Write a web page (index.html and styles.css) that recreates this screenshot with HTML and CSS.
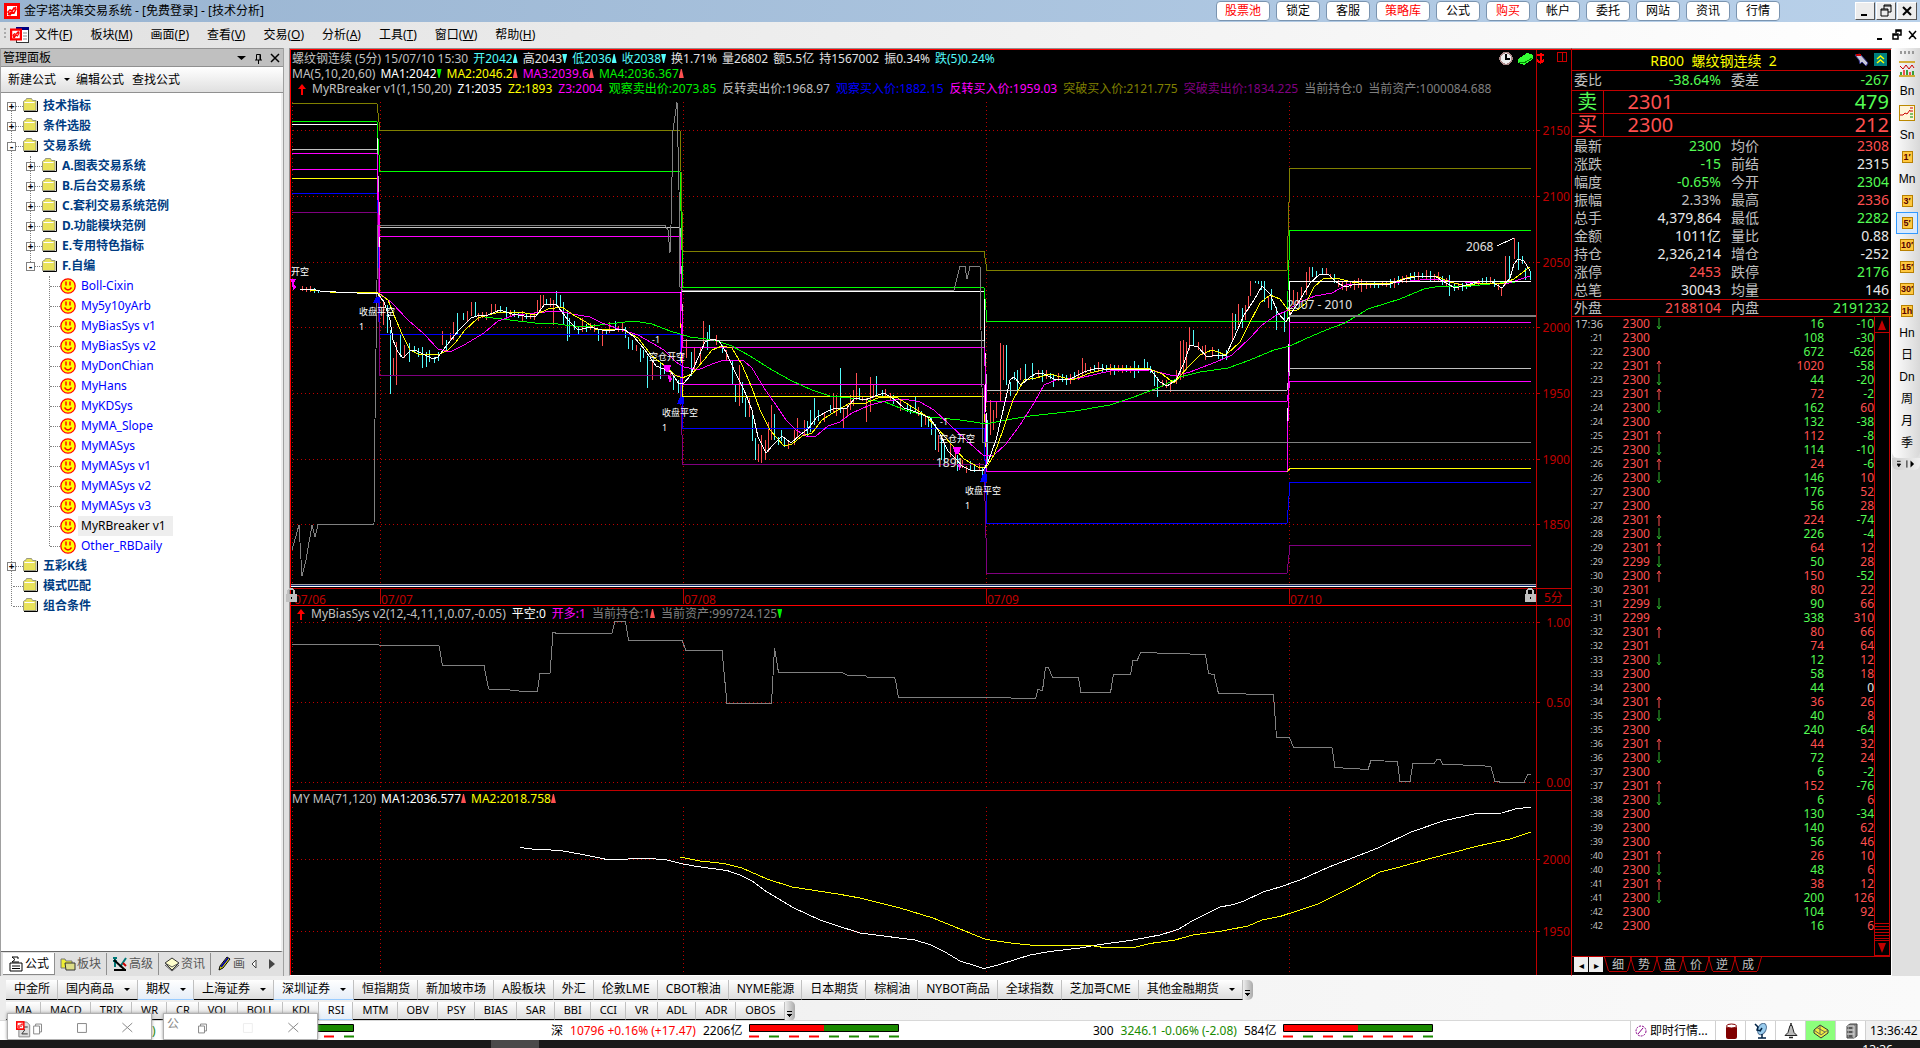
FILE: index.html
```html
<!DOCTYPE html>
<html lang="zh-CN">
<head>
<meta charset="utf-8">
<title>金字塔决策交易系统</title>
<link rel="stylesheet" href="styles.css">
</head>
<body>
<svg class="defs" aria-hidden="true">
  <symbol id="logo" viewBox="0 0 16 16"><rect width="16" height="16" fill="#f00"/><rect x="3" y="3" width="10" height="10" fill="#fff"/><path d="M4 12l3-3M9 7l3-3M4 9l2-2 2 1 2-3 2 1-2 4-2-1-2 3z" fill="none" stroke="#f00" stroke-width="1.5"/></symbol>
  <symbol id="folder" viewBox="0 0 16 14"><path d="M1.5 12.500V3.500l1-1h1l1-2h5l1 2h3.500v10z" fill="#e9e25a" stroke="#9a9a80"/><path d="M2 13.500h13.500V3" fill="none" stroke="#000"/><path d="M2.500 4.500h10" stroke="#fff"/></symbol>
  <symbol id="smile" viewBox="0 0 16 16"><circle cx="8" cy="8" r="7.200" fill="#ff0" stroke="#f00" stroke-width="1.300"/><path d="M6 3.500v4M10 3.500v4M4.500 9.500q3.500 5 7 0" fill="none" stroke="#f00" stroke-width="1.400"/></symbol>
  <symbol id="lock" viewBox="0 0 12 14"><path d="M3 7V3q0-2 3-2t3 2v4" fill="none" stroke="#c0c0c0" stroke-width="1.500"/><rect x="1" y="6" width="11" height="8" fill="#c0c0c0"/><rect x="6" y="9" width="1" height="2" fill="#000"/></symbol>
</svg>

<header class="title">
  <svg class="i16"><use href="#logo"/></svg>
  <h1>金字塔决策交易系统 - [免费登录] - [技术分析]</h1>
  <nav class="pills">
    <button class="red">股票池</button><button>锁定</button><button>客服</button><button class="red">策略库</button><button>公式</button><button class="red">购买</button><button>帐户</button><button>委托</button><button>网站</button><button>资讯</button><button>行情</button>
  </nav>
  <div class="winbtns">
    <button aria-label="最小化"><svg viewBox="0 0 16 16"><path d="M4 12h6" stroke="#000" stroke-width="2"/></svg></button>
    <button aria-label="还原"><svg viewBox="0 0 16 16"><path d="M6 6V2h7v7h-3M6 3h7M3 6h7v7H3zM3 7h7" fill="none" stroke="#000"/></svg></button>
    <button aria-label="关闭"><svg viewBox="0 0 16 16"><path d="M4 4l8 8M12 4l-8 8" stroke="#000" stroke-width="2"/></svg></button>
  </div>
</header>

<nav class="menu">
  <svg class="mdi" viewBox="0 0 26 18"><path d="M1 3h2M1 7h2M1 11h2" stroke="#aaa" stroke-width="2"/><rect x="13.500" y="1.500" width="12" height="15" fill="#fff" stroke="#333"/><rect x="13" y="1" width="13" height="3" fill="#000080"/><path d="M20 7h4M20 10h4M20 13h4" stroke="#888"/><svg x="7" y="2" width="12" height="13"><use href="#logo" width="12" height="13"/></svg></svg>
  <a href="#">文件(<u>F</u>)</a><a href="#">板块(<u>M</u>)</a><a href="#">画面(<u>P</u>)</a><a href="#">查看(<u>V</u>)</a><a href="#">交易(<u>O</u>)</a><a href="#">分析(<u>A</u>)</a><a href="#">工具(<u>T</u>)</a><a href="#">窗口(<u>W</u>)</a><a href="#">帮助(<u>H</u>)</a>
  <svg class="mdibtns" viewBox="0 0 44 14"><path d="M1 11h5" stroke="#000" stroke-width="2"/><path d="M20 5V2h5v5h-2M20 3h5M17 6h5v5h-5zM17 7h5M33 3l7 8M40 3l-7 8" fill="none" stroke="#000" stroke-width="1.500"/></svg>
</nav>

<main class="work">
  <aside class="panel">
    <div class="phead"><h2>管理面板</h2>
      <svg viewBox="0 0 46 12"><path d="M0 4h9l-4.500 4z"/><path d="M18 8h7M19.500 8V2.500h4V8M21.500 8v4M23 3v5" fill="none" stroke="#000"/><path d="M34 2l8 8M42 2l-8 8" stroke="#000" stroke-width="1.500"/></svg></div>
    <div class="ptools"><button>新建公式</button><i class="dd"></i><button>编辑公式</button><button>查找公式</button></div>
    <div class="tree">
      <ul class="l1">
        <li><button class="box">+</button><svg class="fo"><use href="#folder"/></svg>技术指标</li>
        <li><button class="box">+</button><svg class="fo"><use href="#folder"/></svg>条件选股</li>
        <li><button class="box">-</button><svg class="fo"><use href="#folder"/></svg>交易系统</li>
        <ul class="l2">
          <li><button class="box">+</button><svg class="fo"><use href="#folder"/></svg>A.图表交易系统</li>
          <li><button class="box">+</button><svg class="fo"><use href="#folder"/></svg>B.后台交易系统</li>
          <li><button class="box">+</button><svg class="fo"><use href="#folder"/></svg>C.套利交易系统范例</li>
          <li><button class="box">+</button><svg class="fo"><use href="#folder"/></svg>D.功能模块范例</li>
          <li><button class="box">+</button><svg class="fo"><use href="#folder"/></svg>E.专用特色指标</li>
          <li><button class="box">-</button><svg class="fo"><use href="#folder"/></svg>F.自编</li>
        </ul>
        <ul class="l3">
          <li><svg class="i16"><use href="#smile"/></svg><span>Boll-Cixin</span></li>
          <li><svg class="i16"><use href="#smile"/></svg><span>My5y10yArb</span></li>
          <li><svg class="i16"><use href="#smile"/></svg><span>MyBiasSys v1</span></li>
          <li><svg class="i16"><use href="#smile"/></svg><span>MyBiasSys v2</span></li>
          <li><svg class="i16"><use href="#smile"/></svg><span>MyDonChian</span></li>
          <li><svg class="i16"><use href="#smile"/></svg><span>MyHans</span></li>
          <li><svg class="i16"><use href="#smile"/></svg><span>MyKDSys</span></li>
          <li><svg class="i16"><use href="#smile"/></svg><span>MyMA_Slope</span></li>
          <li><svg class="i16"><use href="#smile"/></svg><span>MyMASys</span></li>
          <li><svg class="i16"><use href="#smile"/></svg><span>MyMASys v1</span></li>
          <li><svg class="i16"><use href="#smile"/></svg><span>MyMASys v2</span></li>
          <li><svg class="i16"><use href="#smile"/></svg><span>MyMASys v3</span></li>
          <li><svg class="i16"><use href="#smile"/></svg><span class="sel">MyRBreaker v1</span></li>
          <li><svg class="i16"><use href="#smile"/></svg><span>Other_RBDaily</span></li>
        </ul>
        <li><button class="box">+</button><svg class="fo"><use href="#folder"/></svg>五彩K线</li>
        <li><i class="stub"></i><svg class="fo"><use href="#folder"/></svg>模式匹配</li>
        <li><i class="stub"></i><svg class="fo"><use href="#folder"/></svg>组合条件</li>
      </ul>
    </div>
    <nav class="ptabs">
      <button class="on"><svg class="i16" viewBox="0 0 16 16"><path d="M2 7h12v8H2zM4 10h8M4 12.500h8M10 3V1H4l3 2.500L4 6h7" fill="none" stroke="#000"/></svg>公式</button>
      <button><svg class="i16" viewBox="0 0 16 16"><path d="M1 12V3h4l1 2h6v7z" fill="#ee3" stroke="#777"/><path d="M5 7h10v7H6z" fill="#dd8" stroke="#333"/></svg>板块</button>
      <button><svg class="i16" viewBox="0 0 16 16"><path d="M1 2h4M1 5h4M3 2v9M8 11l6-9" stroke="#077" stroke-width="2"/><path d="M2 4l11 10M2 14h12" stroke="#000" stroke-width="2"/><path d="M11 7l3 3" stroke="#c00" stroke-width="2"/></svg>高级</button>
      <button><svg class="i16" viewBox="0 0 16 16"><path d="M1 7l7-5 7 5-7 7z" fill="#ffc" stroke="#333"/><path d="M1 7l7 4 7-4M1 9l7 6 7-6" fill="none" stroke="#555"/></svg>资讯</button>
      <button><svg class="i16" viewBox="0 0 16 16"><path d="M3 14l1-4 7-9 3 2-7 9z" fill="#ee0" stroke="#000"/><path d="M5 11l7-9" stroke="#00a" stroke-width="2"/></svg>画</button>
      <svg class="parr" viewBox="0 0 26 10"><path d="M6 1v8L2 5z" fill="#fff" stroke="#444"/><path d="M19 0v10l6-5z" fill="#444"/></svg>
    </nav>
  </aside>

  <section class="charts">
    <div class="legend main">
      <p><span>螺纹钢连续 (5分) 15/07/10 15:30</span> <span class="cy">开2042</span><i class="up cy"></i><span class="lt">高2043</span><i class="dn cy"></i><span class="cy">低2036</span><i class="up cy"></i><span class="cy">收2038</span><i class="dn cy"></i><span class="lt">换1.71%</span><span class="lt">量26802</span><span class="lt">额5.5亿</span><span class="lt">持1567002</span><span class="lt">振0.34%</span><span class="cy">跌(5)0.24%</span></p>
      <p><span>MA(5,10,20,60)</span> <span class="wh">MA1:2042</span><i class="dn gn"></i><span class="ye">MA2:2046.2</span><i class="up rd"></i><span class="mg">MA3:2039.6</span><i class="up rd"></i><span class="gn">MA4:2036.367</span><i class="up rd"></i></p>
      <p class="ind"><b class="arrow"></b><span>MyRBreaker v1(1,150,20)</span><span class="wh">Z1:2035</span><span class="ye">Z2:1893</span><span class="mg">Z3:2004</span><span class="gn">观察卖出价:2073.85</span><span class="si">反转卖出价:1968.97</span><span class="bl">观察买入价:1882.15</span><span class="mg">反转买入价:1959.03</span><span class="ol">突破买入价:2121.775</span><span class="pu">突破卖出价:1834.225</span><span class="gy">当前持仓:0</span><span class="gy">当前资产:1000084.688</span></p>
    </div>
    <svg class="plot" viewBox="291 98 1280 508">
      <g class="grid">
        <path d="M293 130.500H1536M293 196.500H1536M293 262.500H1536M293 327.500H1536M293 393.500H1536M293 459.500H1536M293 524.500H1536"/>
        <path d="M292.500 102V584M380.500 102V584M683.500 102V584M986.500 102V584M1289.500 102V584"/>
      </g>
      <g id="candles"></g>
      <g id="levels"></g>
      <g id="averages"></g>
      <path d="M1289 316H1536" stroke="#808080" stroke-width="2"/>
      <path d="M1289 281.500H1531" stroke="#fff"/>
      <path d="M1497 246L1514 238" stroke="#fff"/>
      <path d="M291 584.500H1536" stroke="#a0a0a0"/><path d="M291 585.500H1536" stroke="#0a246a"/><path d="M291 586.500H1536" stroke="#fff"/>
      <g class="axis"><path d="M291 588.500H1571M380.500 588V604M683.500 588V604M986.500 588V604M1289.500 588V604"/><path d="M1536.500 50V606M1536 130.500h4M1536 196.500h4M1536 262.500h4M1536 327.500h4M1536 393.500h4M1536 459.500h4M1536 524.500h4"/><path d="M291 605.500H1571" stroke="#f00"/></g>
      <g class="ticks end"><text x="1570" y="135">2150</text><text x="1570" y="201">2100</text><text x="1570" y="267">2050</text><text x="1570" y="332">2000</text><text x="1570" y="398">1950</text><text x="1570" y="464">1900</text><text x="1570" y="529">1850</text></g>
      <g class="ticks"><text x="294" y="604">07/06</text><text x="381" y="604">07/07</text><text x="684" y="604">07/08</text><text x="987" y="604">07/09</text><text x="1290" y="604">07/10</text><text x="1544" y="602">5分</text></g>
      <g fill="#f0f"><path d="M290 279h6l-3 6zM292 284h2l2 3-3 3zM663 365h8l-2 7h-3zM668 375l4 4-3 4zM953 447h8l-2 7h-4zM958 463l3 4-2 4z"/></g>
      <g fill="#00f"><path d="M373 303l3-6h4v6zM677 404l3-7h4v7zM980 482l3-8h4v8z"/></g>
      <g class="marks"><text x="291" y="275">开空</text><text x="359" y="315">收盘平空</text><text x="359" y="330">1</text><text x="652" y="343">-1</text><text x="649" y="360">空仓开空</text><text x="662" y="416">收盘平空</text><text x="662" y="431">1</text><text x="940" y="425">-1</text><text x="939" y="442">空仓开空</text><text x="965" y="494">收盘平空</text><text x="965" y="509">1</text></g>
      <g class="notes"><text x="936" y="467">1891</text><text x="1466" y="251">2068</text><text x="1287" y="309">2007 - 2010</text></g>
      <use href="#lock" x="285" y="588" width="12" height="14"/><use href="#lock" x="1524" y="588" width="12" height="14"/>
      <circle cx="1506" cy="58.500" r="6" fill="#eee" stroke="#a88" stroke-width="1.500"/><path d="M1506 54v5h4" fill="none" stroke="#000" stroke-width="1.500"/>
      <path d="M1518 59l9-6 6 2v4l-9 6-6-2z" fill="#3f3"/><path d="M1519 62l5 1 8-5" fill="none" stroke="#080"/>
      <path d="M1540.500 53v9M1537 55h7M1537 60l3.500 3 3.500-3" fill="none" stroke="#f00" stroke-width="2"/>
      <path d="M1557.500 52.500h9v9h-9zM1562.500 52.500v9" fill="none" stroke="#c00"/>
    </svg>

    <div class="legend ind"><b class="arrow"></b><span>MyBiasSys v2(12,-4,11,1,0.07,-0.05)</span><span class="wh">平空:0</span><span class="mg">开多:1</span><span class="gy tight">当前持仓:1</span><i class="up rd"></i><span class="gy tight">当前资产:999724.125</span><i class="dn gn"></i></div>
    <svg class="plot" viewBox="291 622 1280 169">
      <g class="grid"><path d="M293 622.500H1536M293 702.500H1536M293 782.500H1536"/><path d="M292.500 622V787M380.500 622V787M683.500 622V787M986.500 622V787M1289.500 622V787"/></g>
      <polyline class="line" stroke="#808080" points="292,644.500 379,645 439,645.500 442.500,665.500 484,665.500 488.500,689 506,689.500 519,691 537.500,691 540,673.500 550,673.500 553,632.500 558,633.500 612,633.500 615,621.500 625.500,621.500 628.500,640.500 682,640.500 686,650.500 722,650.500 727,703.500 771.500,703.500 774.500,648 778.500,672.500 842,672.500 848,675.500 865,675.500 868,677.500 894,677.500 895.500,680 898.500,697.500 985,697.500 1035.500,698.500 1038,689.500 1042.500,690.500 1045.500,667.500 1048.500,667.500 1052.500,677.500 1078.500,677.500 1081,692.500 1110.500,692.500 1113.500,674.500 1130.500,674.500 1133,660.500 1137,661 1140.500,652.500 1205.500,654.500 1208.500,673.500 1214,674.500 1218.500,693.500 1273.500,694.500 1276.500,737.500 1289.500,737.500 1293.500,747.500 1332,747.500 1335,767.500 1368,769.500 1371,760.500 1397.500,761.500 1400,781.500 1410,781.500 1413,763.500 1434,763.500 1437,759.500 1440,759.500 1443,764.500 1482,765.500 1491,767 1495,781.500 1504,782.500 1524,782.500 1527.500,774.500 1531,774.500"/>
      <g class="axis"><path d="M1536.500 606V790M1536 622.500h4M1536 702.500h4M1536 782.500h4M291 790.500H1571"/></g>
      <g class="ticks end"><text x="1570" y="627">1.00</text><text x="1570" y="707">0.50</text><text x="1570" y="787">0.00</text></g>
    </svg>

    <div class="legend"><span>MY MA(71,120)</span> <span class="wh">MA1:2036.577</span><i class="up rd"></i><span class="ye">MA2:2018.758</span><i class="up rd"></i></div>
    <svg class="plot" viewBox="291 807 1280 168">
      <g class="grid"><path d="M293 859.500H1536M293 931.500H1536"/><path d="M292.500 807V975M380.500 807V975M683.500 807V975M986.500 807V975M1289.500 807V975"/></g>
      <polyline class="line" stroke="#fff" points="520,847.500 532,849 560,850.500 580,854 607,859.500 650,858.500 667,860 683,864 697,866.500 727,870.500 740,875 752,881 767,892 794,908 820,920 838,926 860,933 915,940 931,945 945,952 960,961 984,968.500 998,965 1030,955 1050,951.500 1080,948 1100,944.500 1130,940.500 1160,935 1178,929.500 1192,921 1220,907 1234,904.500 1244,901 1263,892 1280,887 1300,880 1329,867 1378,848 1411,832 1443,821 1476,813.500 1502,813 1515,809 1531,807"/>
      <polyline class="line" stroke="#ff0" points="680,857 700,861 724,863.500 742,868 767,879 792,887 838,894 860,898 900,908 933,918 960,929 986,939.500 1015,943.500 1035,945.500 1090,945.500 1104,947.500 1134,947.500 1150,943.500 1175,940 1193,935 1222,931 1248,926 1262,920 1280,916.500 1318,904 1352,887 1380,872 1398,867.500 1430,858.500 1478,846 1510,839 1531,832"/>
      <g class="axis"><path d="M1536.500 791V975M1536 859.500h4M1536 931.500h4"/></g>
      <g class="ticks end"><text x="1570" y="864">2000</text><text x="1570" y="936">1950</text></g>
    </svg>
  </section>

  <section class="quote">
    <h2>RB00&nbsp; 螺纹钢连续&nbsp; 2
      <svg viewBox="0 0 34 14"><path d="M1 2l5-1 8 9-2 3-4-4-2 2-1-4z" fill="#c8c8d8" stroke="#338"/><path d="M2 2h5" stroke="#c00" stroke-width="2"/><rect x="20" width="13" height="13" fill="#008080"/><path d="M23 6l3.500-3L30 6M23 10l3.500-3 3.500 3" fill="none" stroke="#ff0" stroke-width="1.500"/></svg></h2>
    <table class="stats wei"><tr><th>委比</th><td class="g">-38.64%</td><th>委差</th><td class="g">-267</td></tr></table>
    <table class="book"><tr><th class="g">卖</th><td class="r">2301</td><td class="g">479</td></tr><tr><th class="r">买</th><td class="r">2300</td><td class="r">212</td></tr></table>
    <table class="stats">
      <tr><th>最新</th><td class="g">2300</td><th>均价</th><td class="r">2308</td></tr>
      <tr><th>涨跌</th><td class="g">-15</td><th>前结</th><td>2315</td></tr>
      <tr><th>幅度</th><td class="g">-0.65%</td><th>今开</th><td class="g">2304</td></tr>
      <tr><th>振幅</th><td class="s">2.33%</td><th>最高</th><td class="r">2336</td></tr>
      <tr><th>总手</th><td>4,379,864</td><th>最低</th><td class="g">2282</td></tr>
      <tr><th>金额</th><td>1011亿</td><th>量比</th><td>0.88</td></tr>
      <tr><th>持仓</th><td>2,326,214</td><th>增仓</th><td>-252</td></tr>
      <tr><th>涨停</th><td class="r">2453</td><th>跌停</th><td class="g">2176</td></tr>
      <tr><th>总笔</th><td>30043</td><th>均量</th><td>146</td></tr>
    </table>
    <table class="stats pan"><tr><th>外盘</th><td class="r">2188104</td><th>内盘</th><td class="g">2191232</td></tr></table>
    <div class="tape">
      <table><tbody id="tape"></tbody></table>
      <div class="sbar"><i class="sup"></i><i class="sthumb"></i><i class="sdn"></i></div>
    </div>
    <nav class="qtabs"><button class="nv">◂</button><button class="nv">▸</button>
      <button>细</button><button>势</button><button>盘</button><button>价</button><button>逆</button><button>成</button></nav>
  </section>

  <nav class="side">
    <div class="sidebar">
      <i class="grip"></i>
      <button aria-label="指标"><svg class="i16" viewBox="0 0 16 16"><path d="M0 1h16M0 15h16" stroke="#c90" stroke-width="1.500"/><path d="M1 5l3 3 3-4 3 4 3-4 2 3" fill="none" stroke="#c00"/><path d="M2 14v-3M8 14V9M14 14v-4" stroke="#080" stroke-width="1.500"/><path d="M5 14V9M11 14v-3" stroke="#e22" stroke-width="1.500"/></svg></button>
      <button>Bn</button>
      <button aria-label="分时"><svg class="i16" viewBox="0 0 16 16"><rect x=".5" y=".5" width="15" height="15" fill="#fff4d8" stroke="#b80"/><path d="M1 10h3l2-2 2 1 3-4" fill="none" stroke="#c00"/><path d="M11 3h3M11 6h3" stroke="#c00"/><path d="M11 9h3M11 12h3" stroke="#080"/></svg></button>
      <button>Sn</button><button><b>1′</b></button><button>Mn</button><button><b>3′</b></button><button class="cur"><b>5′</b></button><button><b>10′</b></button><button><b>15′</b></button><button><b>30′</b></button><button><b>1h</b></button><button>Hn</button><button>日</button><button>Dn</button><button>周</button><button>月</button><button>季</button>
    </div>
    <div class="more"><svg viewBox="0 0 20 8"><path d="M0 1h4M0 4h4l-2 3zM11 0v8" stroke="#000"/><path d="M15 0v8l4-4z"/></svg></div>
  </nav>
</main>

<nav class="bar markets">
  <button>中金所</button><button class="d">国内商品</button><button class="d hl">期权</button><button class="d">上海证券</button><button class="d hl">深圳证券</button><button>恒指期货</button><button>新加坡市场</button><button>A股板块</button><button>外汇</button><button>伦敦LME</button><button>CBOT粮油</button><button>NYME能源</button><button>日本期货</button><button>棕榈油</button><button>NYBOT商品</button><button>全球指数</button><button>芝加哥CME</button><button class="d">其他金融期货</button><i class="end"></i>
</nav>
<nav class="bar inds">
  <button>MA</button><button>MACD</button><button>TRIX</button><button>WR</button><button>CR</button><button>VOL</button><button>BOLL</button><button>KDJ</button><button class="hl">RSI</button><button>MTM</button><button>OBV</button><button>PSY</button><button>BIAS</button><button>SAR</button><button>BBI</button><button>CCI</button><button>VR</button><button>ADL</button><button>ADR</button><button>OBOS</button><i class="end"></i>
</nav>
<footer class="status">
  <div class="idx sh"><span class="dg">)</span> 1<svg viewBox="0 0 150 16"><path d="M1 5h60" stroke="red" stroke-width="8"/><path d="M60 5h89" stroke="#1a8a00" stroke-width="8"/><path d="M.5 1.500h149v7H.5z" fill="none" stroke="#000"/><path d="M120 13.500h10" stroke="red" stroke-width="2"/><path d="M140 13.500h10" stroke="#1a8a00" stroke-width="2"/></svg></div>
  <div class="idx sz">深 <span class="rr">10796 +0.16% (+17.47)</span> 2206亿<svg viewBox="0 0 150 16"><path d="M1 5h75" stroke="red" stroke-width="8"/><path d="M75 5h74" stroke="#1a8a00" stroke-width="8"/><path d="M.5 1.500h149v7H.5z" fill="none" stroke="#000"/><path d="M0 13.500h10M40 13.500h10M60 13.500h10" stroke="red" stroke-width="2"/><path d="M20 13.500h10M80 13.500h10M100 13.500h10M120 13.500h10M140 13.500h10" stroke="#1a8a00" stroke-width="2"/></svg></div>
  <div class="idx hs">300 <span class="dg">3246.1 -0.06% (-2.08)</span> 584亿<svg viewBox="0 0 150 16"><path d="M1 5h75" stroke="red" stroke-width="8"/><path d="M75 5h74" stroke="#1a8a00" stroke-width="8"/><path d="M.5 1.500h149v7H.5z" fill="none" stroke="#000"/><path d="M0 13.500h10M40 13.500h10M80 13.500h10M100 13.500h10M120 13.500h10" stroke="red" stroke-width="2"/><path d="M20 13.500h10M60 13.500h10M140 13.500h10" stroke="#1a8a00" stroke-width="2"/></svg></div>
  <div class="tray">
    <button class="live"><svg viewBox="0 0 12 12"><circle cx="6" cy="6" r="5" fill="#fff" stroke="#808" stroke-dasharray="2 1"/><path d="M3 9l5-6" stroke="#808"/></svg>即时行情...</button>
    <button aria-label="数据"><svg class="i16" viewBox="0 0 16 16"><rect x="3" y="3" width="11" height="13" rx="2" fill="#800000"/><ellipse cx="8.500" cy="3" rx="5" ry="2" fill="#fff" stroke="#800000"/></svg></button>
    <button aria-label="连接"><svg class="i16" viewBox="0 0 16 16"><ellipse cx="9" cy="6" rx="4" ry="6" transform="rotate(25 9 6)" fill="#9ce" stroke="#579"/><path d="M2 1l3 3-1 3 4 1M9 5l-2 3M5 15h8M9 11v4" fill="none" stroke="#024" stroke-width="1.500"/></svg></button>
    <button aria-label="提醒"><svg class="i16" viewBox="0 0 16 16"><path d="M2 12.500l3-3 2-7h2l2 7 3 3z" fill="#bbb" stroke="#222"/><path d="M8 0v3M6 14.500h4" stroke="#222" stroke-width="1.500"/></svg></button>
    <button aria-label="邮件" class="ok"><svg class="i16" viewBox="0 0 16 16"><path d="M1 7l6-5 8 5v3l-7 5-7-5z" fill="#ee4" stroke="#333"/><path d="M1 7l7 5 7-5M4 4.500l8 4.500M7 2v9" fill="none" stroke="#665"/></svg></button>
    <button aria-label="服务器"><svg class="i16" viewBox="0 0 16 16"><path d="M4 3l3-2h7v12l-3 2H4z" fill="#888" stroke="#444"/><path d="M4 3h7v12M4 7h7M4 11h7" fill="none" stroke="#ddd"/><path d="M6 5h3M6 9h3M6 13h3" stroke="#222"/></svg></button>
    <time>13:36:42</time>
  </div>
  <div class="mini m1"><svg viewBox="0 0 145 27"><path d="M11 8h8l3 3v12H11z" fill="#ddd" stroke="#888"/><path d="M20 13h-6l3 3-3 4h6" fill="none" stroke="#333"/><svg x="8" y="7" width="9" height="9"><use href="#logo" width="9" height="9"/></svg><path d="M26 12h6v8h-6zM28 12v-2h6v8h-2M70.500 9.500h9v9h-9zM116 9l10 9M126 9l-10 9" fill="none" stroke="#888"/></svg></div>
  <div class="mini m2"><span>公</span><svg viewBox="0 0 155 27"><path d="M35 12h6v7h-6zM37 12v-2h6v7h-2M126 9l10 9M136 9l-10 9" fill="none" stroke="#888"/><path d="M80.500 9.500h9v9h-9z" fill="none" stroke="#eee"/></svg></div>
</footer>
<div class="taskbar"><i></i><span>13:36</span></div>
<script src="script.js"></script>
</body>
</html>
```
FILE: styles.css
```css
* { box-sizing: border-box; }
body { margin: 0; height: 100vh; overflow: hidden; display: flex; flex-direction: column; background: #ececec; color: #000; font: 12px/16px "Noto Sans", "Noto Sans CJK SC", sans-serif; }
button { font: inherit; color: inherit; background: none; border: 0; padding: 0; white-space: nowrap; }
h1, h2, p, ul { margin: 0; padding: 0; font: inherit; list-style: none; }
a { color: inherit; text-decoration: none; }
svg { display: block; flex: none; }
.defs { position: absolute; width: 0; height: 0; }
.i16 { width: 16px; height: 16px; }

.title { height: 22px; flex: none; display: flex; align-items: center; gap: 4px; padding: 0 3px 0 4px; background: linear-gradient(90deg, #99b4d1, #b9d1ea); }
.pills { display: flex; gap: 6px; margin-left: auto; }
.pills button { height: 20px; min-width: 44px; padding: 0 8px; border: 1px solid #7a94b0; border-radius: 4px; background: #fff; }
.red { color: #f00; }
.winbtns { display: flex; gap: 1px; margin-left: 71px; }
.winbtns button { width: 20px; height: 18px; background: #ececec; border: 1px solid #fff; border-right-color: #555; border-bottom-color: #555; }
.winbtns svg { width: 16px; height: 16px; margin: 0 1px; }

.menu { height: 26px; flex: none; display: flex; align-items: center; gap: 18px; padding: 0 6px 0 3px; background: linear-gradient(90deg, #e1e1e1, #fff); }
.mdi { width: 26px; height: 18px; margin-right: -12px; }
.mdibtns { width: 44px; height: 14px; margin-left: auto; margin-right: -6px; }

.work { flex: 1; min-height: 0; display: flex; background: #e0e0e0; }
.panel { width: 284px; margin-right: 5px; display: flex; flex-direction: column; border-left: 1px solid #a0a0a0; border-right: 1px solid #a0a0a0; }
.phead { height: 19px; display: flex; align-items: center; justify-content: space-between; padding: 1px 0 0 2px; background: #c0c0c0; border-top: 1px solid #909090; border-bottom: 1px solid #909090; }
.phead svg { width: 46px; height: 12px; }
.ptools { height: 26px; display: flex; align-items: center; gap: 8px; padding: 0 7px; background: linear-gradient(#fff, #e0e0e0); border-bottom: 1px solid #909090; }
.dd { border: 3px solid transparent; border-top-color: #000; border-bottom: 0; margin-right: -2px; }
.tree { flex: 1; background: #fff; padding-top: 3px; border-bottom: 1px solid #666; border-right: 2px solid #eee; }
.tree li { height: 20px; display: flex; align-items: center; position: relative; }
.l1 { position: relative; font-weight: bold; color: #003c82; }
.l1 > li { padding-left: 6px; }
.l2 > li { padding-left: 25px; }
.l1::before, .l2::before, .l3::before { content: ""; position: absolute; left: 10px; top: 10px; bottom: 10px; border-left: 1px dotted #808080; }
.l2, .l3 { position: relative; }
.l2::before { left: 29px; top: 0; }
.l3::before { left: 48px; top: 0; }
.box { width: 9px; height: 9px; border: 1px solid #808080; background: #fff; color: #000; font-size: 10px; line-height: 6px; text-align: center; position: relative; }
.fo { width: 16px; height: 14px; margin: 0 5px 2px 6px; }
.stub { width: 9px; }
.tree li::before { content: ""; position: absolute; left: 12px; width: 10px; top: 10px; border-top: 1px dotted #808080; }
.l2 li::before { left: 31px; }
.tree .l3 > li::before { left: 49px; }
.l3 > li { padding-left: 59px; gap: 2px; font-weight: normal; color: #00f; }
.l3 .i16 { position: relative; }
.l3 span { padding: 1px 3px; line-height: 18px; }
.l3 .sel { background: #eee; color: #000; padding-right: 7px; }
.ptabs { height: 24px; display: flex; align-items: center; background: #e0e0e0; padding-left: 2px; color: #555; }
.ptabs button { height: 22px; display: flex; align-items: center; gap: 1px; padding: 0 5px; border-right: 1px solid #909090; }
.ptabs .on { background: #fff; color: #000; border-bottom: 1px solid #888; }
.ptabs button:nth-child(5) { border: 0; }
.parr { width: 26px; height: 10px; }

.charts { flex: 1; min-width: 0; background: #000; border: 1px solid #909090; border-bottom-color: #fff; border-right: 1px solid #c00000; box-shadow: inset 1px 1px #f00; padding: 1px 0 0 1px; }
.legend { height: 16px; padding-left: 1px; display: flex; gap: 5px; white-space: nowrap; color: #c0c0c0; }
.legend.main { display: block; height: 48px; padding-top: 1px; }
.legend p { display: flex; gap: 5px; line-height: 15px; }
.legend .ind, .legend.ind { padding-left: 5px; gap: 6px; }
.arrow { width: 9px; height: 11px; margin: 3px 0; background: linear-gradient(#f00, #f00) 4px 4px / 2px 7px no-repeat; position: relative; }
.arrow::before { content: ""; position: absolute; left: 1px; top: 0; border: 4px solid transparent; border-top: 0; border-bottom: 5px solid #f00; }
.up, .dn { width: 5px; height: 9px; margin: 3px 0 3px -5px; background: currentColor; clip-path: polygon(40% 0, 60% 0, 100% 100%, 0 100%); }
.dn { clip-path: polygon(0 0, 100% 0, 60% 100%, 40% 100%); }
.ind .up, .ind .dn { margin-left: -6px; }
.cy { color: #54fcfc; } .lt { color: #e0e0e0; } .wh { color: #fff; } .ye { color: #ff0; } .mg { color: #f0f; } .gn { color: #00f000; } .rd { color: #ff5050; }
.si { color: #c0c0c0; } .bl { color: #00f; } .ol { color: #808000; } .pu { color: #800080; } .gy { color: #808080; }
.plot { width: 100%; height: auto; overflow: visible; shape-rendering: crispEdges; }
.grid path { fill: none; stroke: #c00000; stroke-dasharray: 1 3; }
.axis path { fill: none; stroke: #c00000; }
.axis path[stroke] { stroke: #f00; }
.line { fill: none; }
.ticks { fill: #c00000; }
.end { text-anchor: end; }
.marks { fill: #fff; font-size: 9px; }
.notes { fill: #e0e0e0; }

.quote { width: 320px; background: #000; color: #e8e8e8; font-size: 14px; display: flex; flex-direction: column; border-top: 1px solid #909090; border-bottom: 1px solid #fff; border-right: 1px solid #fff; }
.quote h2 { height: 22px; line-height: 21px; text-align: center; color: #ff0; border-top: 1px solid #f00; border-bottom: 1px solid #c00000; position: relative; padding-right: 36px; }
.quote h2 svg { position: absolute; right: 3px; top: 3px; width: 34px; height: 14px; }
.quote table { border-collapse: collapse; width: 100%; }
.quote th, .quote td { padding: 0; font-weight: normal; text-align: right; }
.stats { table-layout: fixed; line-height: 18px; border-bottom: 1px solid #c00000; }
.stats th { width: 30px; text-align: left; padding-left: 2px; color: #c0c0c0; }
.stats td:nth-child(2) { width: 119px; }
.stats th:nth-child(3) { width: 40px; padding-left: 10px; }
.stats td:last-child { padding-right: 2px; }
.stats tr { height: 18px; }
.wei tr { height: 19px; }
.pan tr { height: 16px; }
.pan { line-height: 16px; }
.g { color: #54fc54; } .r { color: #ff5050; } .s { color: #c0c0c0; }
.book { font-size: 20px; line-height: 22px; }
.book tr { height: 23px; border-bottom: 1px solid #c00000; }
.book th { width: 31px; text-align: center; border-right: 1px solid #c00000; }
.book td:nth-child(2) { text-align: left; padding-left: 24px; }
.book td:last-child { padding-right: 2px; }
.tape { flex: 1; min-height: 0; display: flex; border-bottom: 1px solid #c00000; font-size: 12px; margin-right: 1px; }
.tape table { flex: 1; align-self: flex-start; table-layout: fixed; }
.tape tr { height: 14px; line-height: 14px; }
.tape td:nth-child(1) { width: 31px; color: #c0c0c0; font-size: 9px; }
.tape tr:first-child td:first-child { font-size: 11px; }
.tape td:nth-child(2) { width: 47px; }
.tape td:nth-child(3) { width: 14px; }
.tape td:nth-child(3) svg { width: 6px; height: 12px; margin-left: 6px; }
.tape td:nth-child(4) { width: 160px; }
.tape td:nth-child(5) { width: 50px; }
.sbar { width: 16px; display: flex; flex-direction: column; border: 1px solid #c00000; border-top: 0; }
.sup { height: 16px; border-bottom: 1px solid #c00000; }
.sup::before, .sdn::before { content: ""; display: block; width: 0; margin: 3px auto 0; border: 4px solid transparent; border-top: 0; border-bottom: 10px solid #c00000; }
.sthumb { height: 17px; margin-top: auto; background: repeating-linear-gradient(#c00000 0 1px, #000 1px 3px); }
.sdn { height: 15px; border-top: 1px solid #c00000; }
.sdn::before { border-bottom: 0; border-top: 10px solid #c00000; margin-top: 2px; }
.qtabs { height: 18px; display: flex; font-size: 12px; color: #c0c0c0; padding-left: 2px; }
.qtabs button { width: 26px; height: 15px; line-height: 14px; position: relative; background: linear-gradient(#c00000, #c00000) 4px 14px / 18px 1px no-repeat; }
.qtabs button::before, .qtabs button::after { content: ""; position: absolute; left: 1px; top: 0; height: 14px; border-left: 1px solid #c00000; transform: skewX(16deg); }
.qtabs button::after { left: auto; right: 1px; transform: skewX(-16deg); }
.qtabs .nv { width: 14px; height: 15px; margin-right: 1px; color: #000; background: #eee; font-size: 10px; }
.qtabs .nv + .nv { margin-right: 2px; }
.qtabs .nv::before, .qtabs .nv::after { display: none; }

.side { width: 28px; display: flex; flex-direction: column; }
.sidebar { background: linear-gradient(90deg, #fff, #d8d8d8); border-radius: 0 0 6px 6px; padding: 3px 2px 4px 4px; }
.sidebar button { width: 22px; height: 22px; display: flex; align-items: center; justify-content: center; font-family: "Liberation Sans", "Noto Sans CJK SC", sans-serif; }
.grip { display: block; height: 3px; margin: 0 4px 4px; background: repeating-linear-gradient(90deg, #999 0 2px, transparent 2px 4px); }
.sidebar b { min-width: 11px; height: 12px; line-height: 10px; font-size: 9px; border: 1px solid #b88000; background: #ffc840; color: #500; text-align: center; }
.sidebar .cur { border: 1px solid #3399ff; background: #d8eaff; }
.more { height: 12px; padding: 2px 5px; background: linear-gradient(90deg, #ccc, #f0f0f0); border-radius: 0 0 6px 6px; }
.more svg { width: 18px; height: 8px; }

.bar { flex: none; display: flex; align-items: center; padding-left: 6px; background: linear-gradient(90deg, #ececec, #fafafa); }
.bar button { height: 20px; display: flex; align-items: center; gap: 10px; padding: 0 7px 0 8px; border-right: 1px solid #c0c0c0; border-bottom: 1px solid #000; background: linear-gradient(#fff, #dcdcdc); }
.bar .d::after { content: ""; border: 3px solid transparent; border-top-color: #000; border-bottom: 0; }
.bar .hl { border-bottom-color: #9cf; background: linear-gradient(#fff, #e6eef8); }
.bar .end { width: 10px; height: 20px; border-radius: 0 5px 5px 0; background: linear-gradient(#000, #000) 2px 10px / 5px 1px no-repeat, conic-gradient(from -45deg at 50% 100%, #000 90deg, transparent 0) 2px 13px / 5px 3px no-repeat, linear-gradient(90deg, #eee, #aaa); }
.markets { height: 25px; padding-top: 2px; }
.inds { height: 19px; font-size: 11px; }
.inds button { height: 18px; padding: 0 8px 0 9px; }

.status { height: 20px; flex: none; display: flex; position: relative; background: #fff; line-height: 20px; border-top: 1px solid #d8d8d8; }
.idx { display: flex; gap: 7px; align-items: center; white-space: nowrap; width: 542px; padding-left: 9px; }
.idx.sh { padding-left: 152px; }
.idx svg { width: 150px; height: 16px; margin-top: 1px; }
.sh svg { margin-left: 28px; }
.rr { color: #f00; } .dg { color: #1a8a00; }
.tray { margin-left: auto; display: flex; background: #f0f0f0; }
.tray button { width: 30px; display: flex; align-items: center; justify-content: center; background: #fff; border-right: 1px solid #d0d0d0; }
.tray .live { width: 86px; gap: 3px; padding-left: 4px; justify-content: flex-start; border-left: 1px solid #d0d0d0; }
.live svg { width: 12px; height: 12px; }
.tray .ok { background: #8cff7c; }
.tray time { width: 54px; padding-left: 4px; }
.mini { position: absolute; bottom: 0; left: 7px; width: 145px; height: 27px; background: #fff; border: 1px solid #b0b0b0; box-shadow: 0 0 3px #999; }
.mini svg { position: absolute; left: 0; top: 0; width: 100%; height: 27px; }
.m2 { left: 163px; width: 155px; color: #888; }
.m2 span { padding-left: 3px; }
.taskbar { height: 8px; flex: none; position: relative; background: #1a1a1a; color: #fff; overflow: hidden; display: flex; }
.taskbar i { width: 48px; margin-left: 491px; background: #4a4a4a; }
.taskbar span { margin-left: auto; padding: 2px 27px 0 0; }
```
FILE: script.js
```js
const NS = 'http://www.w3.org/2000/svg';
const draw = (parent, name, attrs) => {
  const el = document.createElementNS(NS, name);
  for (const key in attrs) el.setAttribute(key, attrs[key]);
  parent.appendChild(el);
};

/* Daily price levels: one value for each of the five sessions. */
const sessions = [[292, 377], [380, 680], [683, 984], [987, 1287], [1290, 1531]];
const levels = [
  ['#808000', [103, 130, 251, 270, 168]],
  ['#fff', [124, 292, 291, 471, 281]],
  ['#ff0', [178, 292, 396, 471, 468]],
  ['#c0c0c0', [149, 227, 340, 390, 368]],
  ['#0000ff', [193, 334, 428, 523, 482]],
  ['#800080', [212, 375, 464, 573, 545]],
  ['#0f0', [121, 171, 287, 321, 230]],
  ['#f0f', [169, 236, 347, 401, 381]],
  ['#f0f', [153, 292, 384, 471, 322]]
];
const levelLayer = document.getElementById('levels');
levels.forEach(([color, ys]) => {
  const points = ys.map((y, i) => `${sessions[i][0]},${y + 0.5} ${sessions[i][1]},${y + 0.5}`).join(' ');
  draw(levelLayer, 'polyline', { points, fill: 'none', stroke: color });
});
draw(levelLayer, 'polyline', { fill: 'none', stroke: '#808080', points: '292,550 299,525 302,576 306,560 312,525 315,537 318,524.5 374,524.5 375,420 377,280 378,225.5 665,225.5 668,230 670,253 671,225 673,130 677,102 679,190 680,287 683,290.5 954,290.5 960,266.5 965,266.5 967,279 970,266.5 980,266.5 981,330 983,442.5 1531,442.5' });

const ma5 = '300,289 312,289 320,291 336,292 378,294 384,302 390,320 393,340 398,352 403,358 411,350 417,351 425,355 433,359 438,357 447,345 458,331 471,318 480,315 488,315 500,310 512,314 524,316 536,316 545,304 556,304 562,312 568,320 578,330 590,327 606,331 624,329 634,337 645,350 656,366 664,369 671,372 679,384 684,383 690,376 698,358 705,342 712,339 719,341 726,352 735,372 744,390 752,410 758,437 766,453 773,445 782,436 791,443 800,435 808,429 817,417 828,411 836,408 846,409 855,398 865,400 875,396 884,393 894,399 904,408 916,412 930,418 938,430 948,451 956,459 962,466 970,470 983,471 988,462 996,440 1002,415 1010,380 1014,377 1021,385 1030,377 1037,373 1044,374 1054,379 1068,380 1076,376 1084,372 1097,368 1110,370 1130,369 1150,369 1160,382 1167,386 1176,380 1184,363 1190,345 1198,347 1207,357 1217,355 1226,355 1234,338 1244,315 1254,300 1262,286 1270,294 1278,313 1286,322 1292,312 1300,300 1310,283 1320,274 1328,274 1336,282 1345,287 1356,284 1370,285 1390,284 1405,279 1420,276 1436,277 1448,284 1455,288 1470,284 1480,281 1492,282 1502,288 1510,278 1514,264 1518,259 1524,261 1530,271';
const averages = [
  ['#0f0', '485,317 510,320 535,323 558,324 580,327 600,325 634,321 652,324 670,331 690,337 714,340 732,346 750,356 772,370 792,381 812,390 830,396 860,399 885,402 905,410 930,417 960,420 987,424 1000,421 1030,416 1075,411 1110,405 1134,397 1160,387 1180,377 1200,372 1228,368 1250,360 1274,350 1290,346 1305,339 1326,330 1345,323 1368,309 1400,299 1424,289 1440,286 1470,286 1500,283 1530,281'],
  ['#f0f', '379,293 392,303 408,320 424,334 438,349 450,352 464,345 484,333 498,321 515,315 545,312 560,311 572,314 590,317 602,323 622,330 638,335 652,343 664,350 676,362 684,367 698,370 712,364 724,360 744,361 752,368 764,388 776,405 786,420 796,430 808,437 816,436 828,426 840,422 852,413 870,405 886,401 904,399 920,402 934,410 950,425 966,440 984,456 994,455 1006,444 1020,425 1034,403 1044,385 1056,380 1080,378 1110,371 1150,370 1174,376 1190,372 1216,362 1232,355 1250,338 1262,325 1275,316 1286,311 1300,302 1315,296 1332,293 1348,284 1380,284 1410,281 1430,279 1450,281 1480,283 1506,284 1518,280 1530,276'],
  ['#ff0', '310,290 330,292 357,292 378,293 388,300 394,315 402,334 410,350 418,354 438,355 448,350 456,342 465,330 478,318 488,315 500,312 520,312 535,315 548,309 562,307 575,316 586,322 595,329 624,330 638,338 652,356 664,365 675,375 682,378 692,374 704,360 712,350 722,346 732,348 742,365 752,388 760,410 770,430 784,446 792,444 802,436 812,433 822,420 836,411 850,403 866,403 880,397 896,397 906,403 926,416 938,429 952,445 964,459 978,467 986,468 994,455 1003,430 1013,400 1024,380 1036,378 1050,374 1072,380 1090,373 1110,368 1150,369 1162,374 1174,383 1188,367 1200,355 1212,350 1226,355 1240,342 1247,328 1260,303 1270,295 1280,299 1288,310 1296,311 1306,303 1314,287 1324,278 1340,279 1352,282 1366,284 1390,283 1410,277 1436,276 1450,282 1466,286 1480,283 1504,283 1514,279 1522,273 1530,267'],
  ['#fff', ma5]
];
averages.forEach(([stroke, points]) => draw(document.getElementById('averages'), 'polyline', { points, fill: 'none', stroke }));

/* Wide-range bars: x, high, low; negative x marks a rising bar. */
const bars = [[-383,300,325],[387,305,333],[390,330,394],[-393,358,376],[-396,342,385],[400,335,357],[-404,345,358],[409,343,362],[422,347,368],[426,352,367],[429,350,362],[-442,331,345],[-450,333,341],[-453,322,340],[457,313,335],[463,313,320],[-467,311,322],[-471,302,316],[475,302,316],[-491,304,313],[-495,304,311],[500,306,313],[-537,300,314],[-540,295,312],[-543,295,306],[546,299,305],[-553,300,325],[556,291,304],[560,295,307],[563,302,325],[567,310,341],[569,318,337],[-582,318,332],[598,329,341],[-602,330,346],[-609,322,333],[615,321,330],[625,327,338],[628,337,349],[632,340,350],[-636,345,351],[640,348,362],[643,350,358],[647,356,388],[-652,362,380],[660,363,379],[664,368,374],[-670,370,382],[673,375,390],[678,380,393],
[-686,339,358],[691,352,376],[-694,348,370],[-700,347,365],[-703,321,345],[707,332,350],[709,325,340],[-716,335,345],[722,345,353],[-726,350,360],[732,360,385],[735,384,402],[-739,365,406],[742,382,403],[745,398,417],[-749,398,417],[752,415,441],[755,438,460],[-758,444,462],[-761,435,463],[-765,440,460],[-768,422,452],[-771,405,440],[774,414,440],[781,430,441],[784,438,447],[-788,440,449],[-794,430,445],[-797,418,437],[-804,420,435],[807,421,436],[810,410,432],[814,398,425],[-824,412,422],[-833,393,412],[-836,395,416],[840,368,413],[-843,409,428],[-847,405,417],[-850,395,410],[-853,390,406],[-856,373,400],[859,388,400],[-866,398,422],[-870,377,412],[-873,385,398],[876,376,396],[882,390,396],[-885,389,396],[893,395,404],[-900,400,411],[907,405,412],[915,397,412],[921,411,427],[-925,415,425],[928,417,427],[931,417,435],[935,424,450],[-938,435,452],[941,440,460],[944,443,463],[-950,443,457],[-955,447,463],[957,455,471],[970,461,471],[-979,463,471],
[987,420,462],[-990,400,435],[-993,410,430],[-996,402,418],[-1000,343,402],[-1003,345,380],[1006,345,385],[1010,382,396],[1017,370,390],[-1020,368,380],[1025,364,382],[1032,363,380],[1042,370,382],[1053,375,387],[-1070,374,384],[-1082,358,378],[-1085,363,373],[-1098,362,372],[1134,361,378],[1144,359,370],[1147,362,371],[1154,371,386],[1157,377,397],[-1170,380,392],[-1176,370,384],[-1180,341,380],[-1183,340,378],[-1186,342,370],[-1189,327,350],[1193,330,345],[-1205,345,360],[-1212,347,357],[-1232,313,340],[1235,314,330],[-1238,304,325],[1242,308,328],[-1245,305,320],[-1248,296,310],[-1250,281,296],[1255,281,283],[1258,281,284],[1261,281,290],[1264,281,302],[-1268,296,308],[1271,289,310],[1276,307,330],
[1284,312,332],[-1293,290,305],[-1297,292,303],[-1301,287,300],[-1306,272,295],[-1309,267,282],[1312,267,277],[1316,271,278],[1322,268,275],[-1326,268,275],[-1361,279,292],[1449,275,296],[-1501,288,296],[-1505,256,285],[1509,256,280],[-1514,238,259],[1518,242,270],[1525,268,280],[1530,271,280]];
const path = ma5.split(' ').map(p => p.split(',').map(Number));
let seed = 7;
const random = () => (seed = (seed * 16807) % 2147483647) / 2147483647;
for (let x = 294; x < 1530; x += 4) {
  if ((x > 318 && x < 382) || bars.some(b => Math.abs(Math.abs(b[0]) - x) < 3)) continue;
  const k = path.findIndex(p => p[0] > x);
  if (k < 1) continue;
  const [a, b] = [path[k - 1], path[k]];
  const y = Math.round(a[1] + (b[1] - a[1]) * (x - a[0]) / (b[0] - a[0]));
  const size = x < 320 ? 1 : 2;
  bars.push([random() > 0.5 ? x : -x, y - size - Math.round(random() * 2 * size), y + size + Math.round(random() * 3)]);
}
bars.forEach(([x, top, bottom]) => draw(document.getElementById('candles'), 'rect', { x: Math.abs(x), y: top, width: 1, height: bottom - top, fill: x < 0 ? '#ff5050' : '#54fcfc' }));

/* Trades: second, price, direction, volume, open-interest change, volume side. */
const trades = `17:36 2300 d 16 -10 g|:21 2300 - 108 -30 g|:22 2300 - 672 -626 g|:22 2301 u 1020 -58 r|:23 2300 d 44 -20 g|:23 2301 u 72 -2 r|:24 2300 d 162 60 g|:24 2300 - 132 -38 g|:25 2301 u 112 -8 r|:25 2300 d 114 -10 g|:26 2301 u 24 -6 r|:26 2300 d 146 10 g|:27 2300 - 176 52 g|:27 2300 - 56 28 g|:28 2301 u 224 -74 r|:28 2300 d 226 -4 g|:29 2301 u 64 12 r|:29 2299 d 50 28 g|:30 2300 u 150 -52 r|:30 2301 - 80 22 r|:31 2299 d 90 66 g|:31 2299 - 338 310 g|:32 2301 u 80 66 r|:32 2301 - 74 64 r|:33 2300 d 12 12 g|:33 2300 - 58 18 g|:34 2300 - 44 0 g|:34 2301 u 36 26 r|:35 2300 d 40 8 g|:35 2300 - 240 -64 g|:36 2301 u 44 32 r|:36 2300 d 72 24 g|:37 2300 - 6 -2 g|:37 2301 u 152 -76 r|:38 2300 d 6 6 g|:38 2300 - 130 -34 g|:39 2300 - 140 62 g|:39 2300 - 56 46 g|:40 2301 u 26 10 r|:40 2300 d 48 6 g|:41 2301 u 38 12 r|:41 2300 d 200 126 g|:42 2300 - 104 92 g|:42 2300 - 16 6 g`;
const arrows = {
  u: '<svg viewBox="0 0 6 12"><path d="M3 12V1M1 4l2-3 2 3" fill="none" stroke="#ff5050"/></svg>',
  d: '<svg viewBox="0 0 6 12"><path d="M3 0v11M1 8l2 3 2-3" fill="none" stroke="#2fb52f"/></svg>',
  '-': ''
};
document.getElementById('tape').innerHTML = trades.split('|').map(row => {
  const [time, price, dir, volume, change, side] = row.split(' ');
  const tone = +change < 0 ? 'g' : +change > 0 ? 'r' : '';
  return `<tr><td>${time}</td><td class="r">${price}</td><td>${arrows[dir]}</td><td class="${side}">${volume}</td><td class="${tone}">${change}</td></tr>`;
}).join('');
```
